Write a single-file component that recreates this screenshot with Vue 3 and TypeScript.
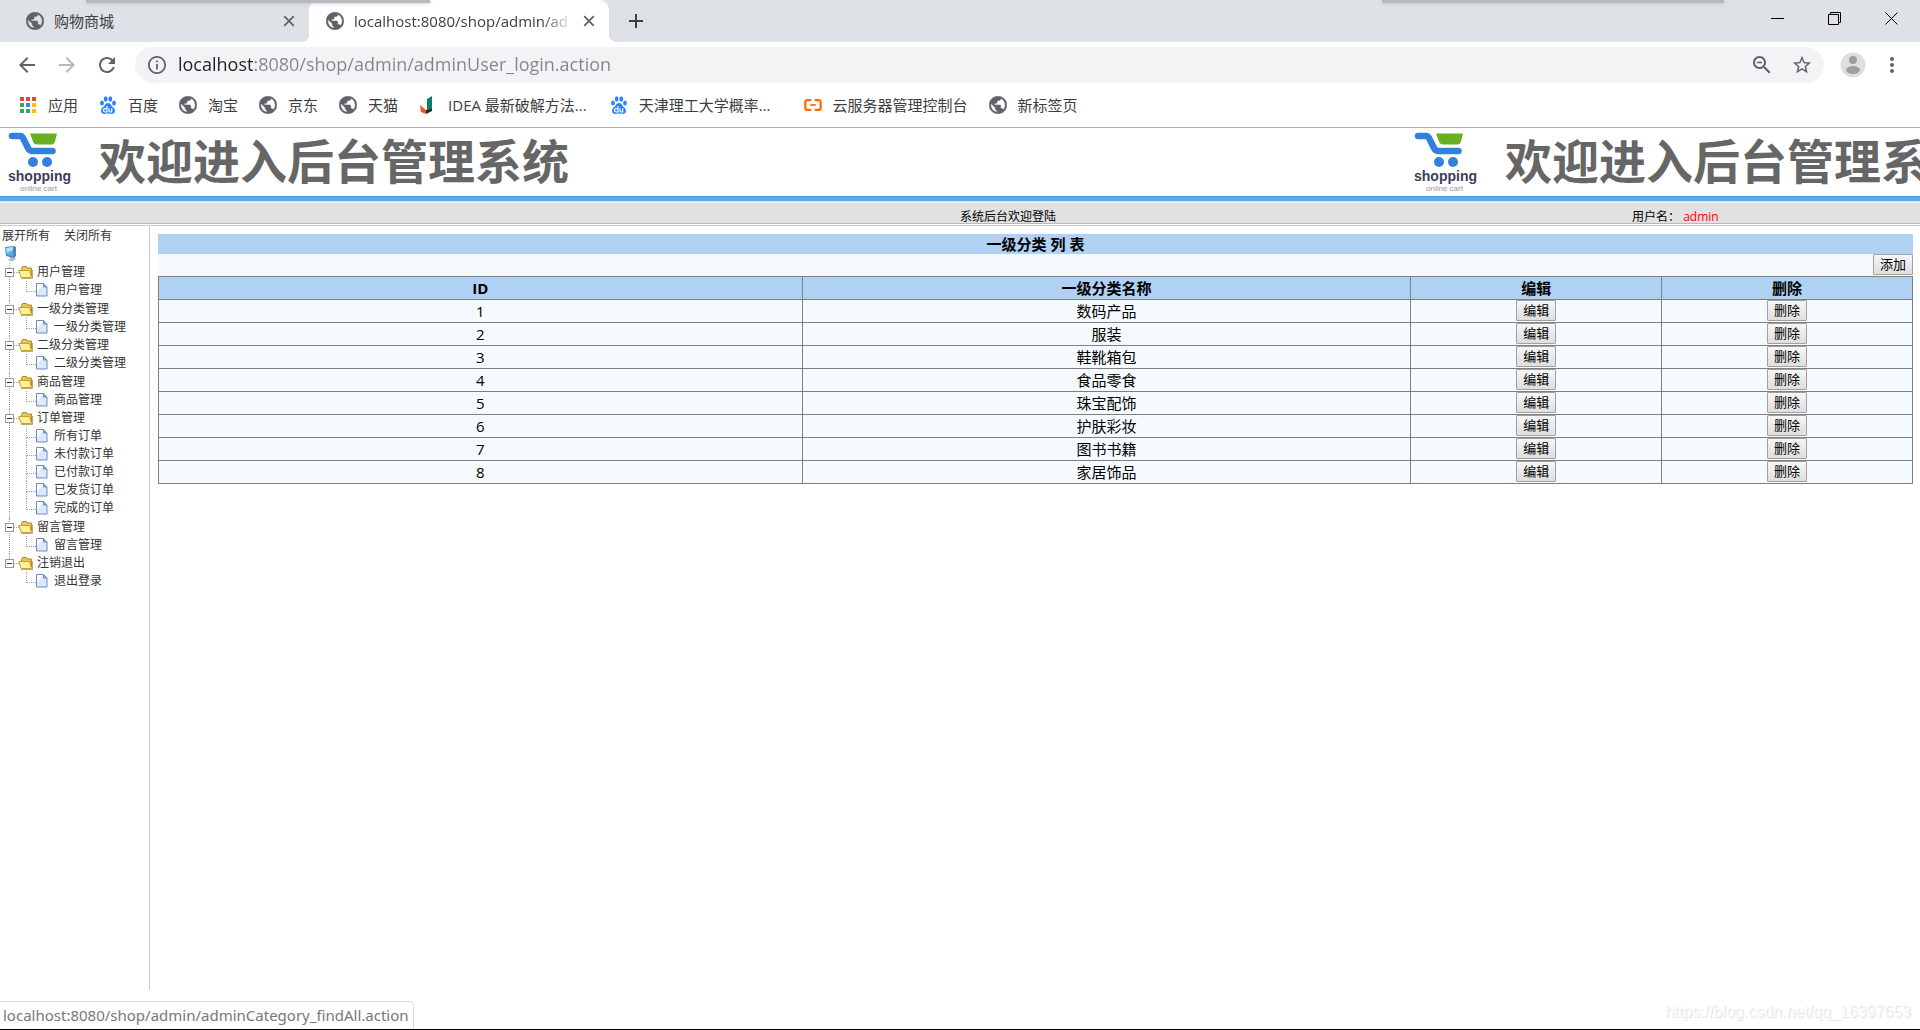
<script setup lang="ts">
import { ref } from 'vue'

interface Bookmark {
  icon: string
  label: string
  cls?: string
}
interface TreeGroup {
  name: string
  open: boolean
  items: string[]
}

const bookmarks: Bookmark[] = [
  { icon: 'apps', label: '应用' },
  { icon: 'paw', label: '百度' },
  { icon: 'globe', label: '淘宝' },
  { icon: 'globe', label: '京东' },
  { icon: 'globe', label: '天猫' },
  { icon: 'idea', label: 'IDEA 最新破解方法...', cls: 'long' },
  { icon: 'paw', label: '天津理工大学概率...', cls: 'wide' },
  { icon: 'cloud', label: '云服务器管理控制台' },
  { icon: 'globe', label: '新标签页' },
]

const groups = ref<TreeGroup[]>([
  { name: '用户管理', open: true, items: ['用户管理'] },
  { name: '一级分类管理', open: true, items: ['一级分类管理'] },
  { name: '二级分类管理', open: true, items: ['二级分类管理'] },
  { name: '商品管理', open: true, items: ['商品管理'] },
  { name: '订单管理', open: true, items: ['所有订单', '未付款订单', '已付款订单', '已发货订单', '完成的订单'] },
  { name: '留言管理', open: true, items: ['留言管理'] },
  { name: '注销退出', open: true, items: ['退出登录'] },
])

const categories = ['数码产品', '服装', '鞋靴箱包', '食品零食', '珠宝配饰', '护肤彩妆', '图书书籍', '家居饰品']

const address = ref('localhost:8080/shop/admin/adminUser_login.action')

function setAll(open: boolean) {
  groups.value.forEach((g) => (g.open = open))
}
</script>

<template>
  <div class="window">
    <svg class="defs" aria-hidden="true">
      <symbol id="globe" viewBox="2 2 20 20">
        <path fill="#5f6368" stroke="#5f6368" stroke-width=".6" d="M12 2.300C6.480 2.300 2.300 6.480 2.300 12s4.180 9.700 9.700 9.700 9.700-4.180 9.700-9.700S17.520 2.300 12 2.300zm-1 17.630c-3.950-.490-7-3.850-7-7.930 0-.620.080-1.210.210-1.790L9 15v1c0 1.100.900 2 2 2v1.930zm6.900-2.540c-.260-.810-1-1.390-1.900-1.390h-1v-3c0-.550-.450-1-1-1H8v-2h2c.550 0 1-.450 1-1V7h2c1.100 0 2-.900 2-2v-.410c2.930 1.190 5 4.060 5 7.410 0 2.080-.800 3.970-2.100 5.390z" />
      </symbol>
      <symbol id="apps" viewBox="0 0 18 18">
        <path fill="#ea4335" d="M1 1h4v4H1zM7 1h4v4H7zM13 1h4v4h-4z" />
        <path fill="#34a853" d="M1 7h4v4H1zM1 13h4v4H1z" />
        <path fill="#4285f4" d="M7 7h4v4H7z" />
        <path fill="#34a853" d="M7 13h4v4H7z" />
        <path fill="#fbbc05" d="M13 7h4v4h-4zM13 13h4v4h-4z" />
      </symbol>
      <symbol id="paw" viewBox="0 0 18 18">
        <g fill="#2a83fb">
          <ellipse cx="3" cy="7" rx="1.900" ry="2.500" />
          <ellipse cx="6.700" cy="3" rx="1.900" ry="2.700" />
          <ellipse cx="11.300" cy="3" rx="1.900" ry="2.700" />
          <ellipse cx="15" cy="7" rx="1.900" ry="2.500" />
          <path d="M9 7c2.200 0 2.800 1.900 4 3.200 1.400 1.400 3.200 2.500 3 5-.200 1.900-1.500 2.700-3.200 2.700-1.400 0-2.300-.300-3.800-.300s-2.400.300-3.800.300C3.500 17.900 2.200 17.100 2 15.200c-.200-2.500 1.600-3.600 3-5C6.200 8.900 6.800 7 9 7z" />
        </g>
        <path fill="none" stroke="#fff" stroke-width="1.200" d="M8 10v6H6.200a1.600 1.600 0 0 1 0-3.400H8M10 12.200v2.600q0 1.200 1.200 1.200h1.500v-3.800" />
      </symbol>
      <symbol id="idea" viewBox="0 0 18 18">
        <path fill="#087e6e" d="M8 3l5-3v14l-5 2z" />
        <path fill="#f05423" d="M1 9l6 5v4l-5-2z" />
        <path fill="#282828" d="M7 14l6-1v2l-6 3z" />
      </symbol>
      <symbol id="cloud" viewBox="0 0 20 14">
        <path fill="none" stroke="#ff6a00" stroke-width="2.500" d="M8 1.500H4q-2.500 0-2.500 2.500v6q0 2.500 2.500 2.500h4M12 1.500h4q2.500 0 2.500 2.500v6q0 2.500-2.500 2.500h-4" />
        <path fill="#ff6a00" d="M7 6h6v2H7z" />
      </symbol>
      <symbol id="cart" viewBox="0 0 50 37">
        <path fill="#68b022" d="M22 2.500h27l-2 8q-1 3-3 3H29q-3 0-4-3z" />
        <path fill="none" stroke="#3280dc" stroke-width="6.500" stroke-linecap="round" stroke-linejoin="round" d="M4 5h8q2 0 3 2l5 10q1.500 3 4.500 3h20" />
        <circle cx="25" cy="31" r="5" fill="#3280dc" />
        <circle cx="39" cy="31" r="5" fill="#3280dc" />
      </symbol>
      <symbol id="computer" viewBox="0 0 12 16">
        <path fill="#aebfd0" d="M4 9l5-1v3l2 2-4 2.500-4-1.500 2-2z" />
        <path fill="#5a82b8" d="M0 1l9-1 2 1v9l-2 2-8-2z" />
        <path fill="#4fb5f2" d="M1 2l7-1v9l-6-1z" />
        <path fill="#a9e3fb" d="M1 2l7-1v3L2 7z" />
      </symbol>
      <symbol id="folder" viewBox="0 0 16 14">
        <path fill="#e9c65a" stroke="#b28a22" d="M3.500 11V3.500l1-2h4l1 1.500h4v8z" />
        <path fill="#fdf09a" stroke="#c9a02c" d="M.800 5.500h10.700l2 7H3.200z" />
        <path fill="none" stroke="#8d7025" d="M3 13.500h11.500V5" opacity=".6" />
      </symbol>
      <symbol id="page" viewBox="0 0 12 14">
        <path fill="#dbe9fc" stroke="#7189bd" d="M.500.500h7l3.500 3.500v9H.500z" />
        <path fill="#fff" d="M1 1h6L1 9z" />
        <path fill="#a5bfe9" stroke="#7189bd" d="M7.500.500v3.500H11z" />
      </symbol>
    </svg>

    <header class="tabs">
      <div class="tab">
        <svg class="i18"><use href="#globe" /></svg>
        <span class="tab-title">购物商城</span>
        <button class="plain" aria-label="关闭标签页">
          <svg class="i12" viewBox="0 0 10 10"><path d="M1 1l8 8M9 1L1 9" /></svg>
        </button>
      </div>
      <div class="tab active">
        <svg class="i18"><use href="#globe" /></svg>
        <span class="tab-title">localhost:8080/shop/admin/ad</span>
        <button class="plain" aria-label="关闭标签页">
          <svg class="i12" viewBox="0 0 10 10"><path d="M1 1l8 8M9 1L1 9" /></svg>
        </button>
      </div>
      <button class="plain new-tab" aria-label="打开新的标签页">
        <svg width="16" height="16" viewBox="0 0 16 16"><path d="M8 1v14M1 8h14" /></svg>
      </button>
      <div class="controls">
        <button class="plain" aria-label="最小化">
          <svg width="13" height="13" viewBox="0 0 13 13"><path d="M0 6.500h13" /></svg>
        </button>
        <button class="plain" aria-label="还原">
          <svg width="13" height="13" viewBox="0 0 13 13"><path d="M.500 2.500h10v10H.500zM2.500 2.500v-2h10v10h-2" /></svg>
        </button>
        <button class="plain" aria-label="关闭">
          <svg width="13" height="13" viewBox="0 0 13 13"><path d="M.500.500l12 12M12.500.500l-12 12" /></svg>
        </button>
      </div>
      <i class="edge left"></i>
      <i class="edge right"></i>
    </header>

    <nav class="toolbar" aria-label="浏览器工具栏">
      <button class="plain" aria-label="后退">
        <svg class="i24" viewBox="0 0 24 24"><path d="M20 11H7.830l5.590-5.590L12 4l-8 8 8 8 1.410-1.410L7.830 13H20v-2z" /></svg>
      </button>
      <button class="plain dim" aria-label="前进">
        <svg class="i24" viewBox="0 0 24 24"><path d="M4 11h12.170l-5.590-5.590L12 4l8 8-8 8-1.410-1.410L16.170 13H4v-2z" /></svg>
      </button>
      <button class="plain" aria-label="重新加载">
        <svg class="i24" viewBox="0 0 24 24"><path d="M17.650 6.350C16.200 4.900 14.210 4 12 4c-4.420 0-7.990 3.580-7.990 8s3.570 8 7.990 8c3.730 0 6.840-2.550 7.730-6h-2.080c-.820 2.330-3.040 4-5.650 4-3.310 0-6-2.690-6-6s2.690-6 6-6c1.660 0 3.140.690 4.220 1.780L13 11h7V4l-2.350 2.350z" /></svg>
      </button>
      <div class="omnibox">
        <svg class="i18" viewBox="2 2 20 20"><path d="M11 17h2v-6h-2v6zm1-15C6.480 2 2 6.480 2 12s4.480 10 10 10 10-4.480 10-10S17.520 2 12 2zm0 18c-4.410 0-8-3.590-8-8s3.590-8 8-8 8 3.590 8 8-3.590 8-8 8zM11 9h2V7h-2v2z" /></svg>
        <input v-model="address" class="url" type="text" aria-label="地址栏" />
        <button class="plain" aria-label="缩放">
          <svg class="i24" viewBox="0 0 24 24"><path d="M15.500 14h-.790l-.280-.270C15.410 12.590 16 11.110 16 9.500 16 5.910 13.090 3 9.500 3S3 5.910 3 9.500 5.910 16 9.500 16c1.610 0 3.090-.590 4.230-1.570l.270.280v.790l5 4.990L20.490 19l-4.990-5zm-6 0C7.010 14 5 11.990 5 9.500S7.010 5 9.500 5 14 7.010 14 9.500 11.990 14 9.500 14zM7 8.800h5v1.400H7z" /></svg>
        </button>
        <button class="plain" aria-label="收藏">
          <svg class="i22" viewBox="0 0 24 24"><path d="M22 9.240l-7.190-.620L12 2 9.190 8.630 2 9.240l5.460 4.730L5.820 21 12 17.270 18.180 21l-1.630-7.030L22 9.240zM12 15.400l-3.760 2.270 1-4.280-3.320-2.880 4.380-.380L12 6.100l1.710 4.040 4.380.380-3.320 2.880 1 4.280L12 15.400z" /></svg>
        </button>
      </div>
      <button class="plain" aria-label="用户">
        <svg class="i26" viewBox="0 0 26 26">
          <circle cx="13" cy="13" r="12.500" fill="#dedede" />
          <circle cx="13" cy="8" r="4" fill="#9e9e9e" />
          <ellipse cx="13" cy="18" rx="7" ry="4" fill="#9e9e9e" />
        </svg>
      </button>
      <button class="plain menu" aria-label="菜单">
        <svg width="6" height="18" viewBox="0 0 6 18"><circle cx="3" cy="3" r="2" /><circle cx="3" cy="9" r="2" /><circle cx="3" cy="15" r="2" /></svg>
      </button>
    </nav>

    <nav class="bookmarks" aria-label="书签栏">
      <a v-for="b in bookmarks" :key="b.label" href="#" :class="b.cls">
        <svg class="i18"><use :href="'#' + b.icon" /></svg>
        <span>{{ b.label }}</span>
      </a>
    </nav>

    <div class="banner">
      <div v-for="n in 2" :key="n" class="banner-tile" :aria-hidden="n > 1">
        <div class="logo">
          <svg class="cart"><use href="#cart" /></svg>
          <b>shopping</b>
          <small>online cart</small>
        </div>
        <span class="welcome">欢迎进入后台管理系统</span>
      </div>
    </div>
    <div class="infobar">
      <span class="hello">系统后台欢迎登陆</span>
      <span>用户名： <em>admin</em></span>
    </div>

    <div class="body">
      <aside class="side">
        <div class="side-actions">
          <a href="#" @click.prevent="setAll(true)">展开所有</a>
          <a href="#" @click.prevent="setAll(false)">关闭所有</a>
        </div>
        <div class="root"><svg class="computer"><use href="#computer" /></svg></div>
        <ul class="tree">
          <li v-for="g in groups" :key="g.name" class="group">
            <div class="node">
              <button class="toggle" :aria-expanded="g.open" :aria-label="g.name" @click="g.open = !g.open"></button>
              <svg class="folder"><use href="#folder" /></svg>
              <a href="#">{{ g.name }}</a>
            </div>
            <ul v-if="g.open" class="leaves">
              <li v-for="item in g.items" :key="item" class="leaf">
                <svg class="page"><use href="#page" /></svg>
                <a href="#">{{ item }}</a>
              </li>
            </ul>
          </li>
        </ul>
      </aside>

      <main class="main">
        <h1>一级分类 列 表</h1>
        <div class="add-row"><button class="btn">添加</button></div>
        <table>
          <colgroup>
            <col class="c-id" />
            <col class="c-name" />
            <col class="c-act" />
            <col class="c-act" />
          </colgroup>
          <thead>
            <tr>
              <th>ID</th>
              <th>一级分类名称</th>
              <th>编辑</th>
              <th>删除</th>
            </tr>
          </thead>
          <tbody>
            <tr v-for="(c, i) in categories" :key="c">
              <td>{{ i + 1 }}</td>
              <td>{{ c }}</td>
              <td class="act"><button class="btn">编辑</button></td>
              <td class="act"><button class="btn">删除</button></td>
            </tr>
          </tbody>
        </table>
      </main>
    </div>

    <div class="status">localhost:8080/shop/admin/adminCategory_findAll.action</div>
    <div class="watermark">https://blog.csdn.net/qq_16397653</div>
  </div>
</template>

<style>
body {
  background: #fff;
}
</style>

<style scoped>
* {
  box-sizing: border-box;
}
.window {
  position: relative;
  display: flex;
  flex-direction: column;
  min-height: 100vh;
  overflow: hidden;
  border-bottom: 1px solid #000;
  background: #fff;
  color: #000;
  font-family: "Open Sans", "Noto Sans CJK SC", sans-serif;
  font-size: 15px;
}
.defs {
  position: absolute;
  width: 0;
  height: 0;
}
svg {
  display: block;
  flex: none;
}
a {
  color: inherit;
  text-decoration: none;
}
ul {
  margin: 0;
  padding: 0;
  list-style: none;
}
.plain {
  display: flex;
  align-items: center;
  justify-content: center;
  flex: none;
  padding: 0;
  border: 0;
  background: none;
}
.i12 {
  width: 12px;
  height: 12px;
}
.i18 {
  width: 18px;
  height: 18px;
}
.i22 {
  width: 22px;
  height: 22px;
}
.i24 {
  width: 24px;
  height: 24px;
}
.i26 {
  width: 26px;
  height: 26px;
}

/* tab strip */
.tabs {
  position: relative;
  display: flex;
  height: 42px;
  padding-left: 9px;
  background: #dee1e6;
}
.tab {
  position: relative;
  display: flex;
  align-items: center;
  width: 300px;
  padding: 0 14px 0 17px;
  color: #3c4043;
}
.tab.active {
  border-radius: 10px 10px 0 0;
  background: #fff;
}
.tab.active::before,
.tab.active::after {
  content: "";
  position: absolute;
  bottom: 0;
  width: 8px;
  height: 8px;
}
.tab.active::before {
  right: 100%;
  background: radial-gradient(circle at 0 0, transparent 8px, #fff 8px);
}
.tab.active::after {
  left: 100%;
  background: radial-gradient(circle at 100% 0, transparent 8px, #fff 8px);
}
.tab-title {
  flex: 1;
  min-width: 0;
  margin: 0 9px 0 10px;
  white-space: nowrap;
  line-height: 20px;
}
.active .tab-title {
  mask-image: linear-gradient(to left, transparent, #000 32px);
}
.tab path {
  fill: none;
  stroke: #5f6368;
  stroke-width: 1.5;
}
.new-tab {
  width: 40px;
  margin-left: 7px;
}
.new-tab path {
  stroke: #3c4043;
  stroke-width: 2;
}
.controls {
  display: flex;
  margin-left: auto;
}
.controls button {
  width: 57px;
  height: 36px;
}
.controls path {
  fill: none;
  stroke: #000;
}
.edge {
  position: absolute;
  top: 0;
  height: 3px;
  background: #b6b9bd;
  box-shadow: 0 0 4px #b6b9bd;
}
.edge.left {
  left: 86px;
  width: 344px;
}
.edge.right {
  right: 196px;
  width: 342px;
}

/* toolbar */
.toolbar {
  display: flex;
  align-items: center;
  gap: 16px;
  height: 46px;
  padding: 0 18px 0 15px;
  fill: #5f6368;
}
.dim {
  opacity: 0.45;
}
.menu {
  width: 20px;
}
.omnibox {
  display: flex;
  align-items: center;
  flex: 1;
  gap: 17px;
  height: 36px;
  padding: 0 11px 0 13px;
  border-radius: 18px;
  background: #f1f3f4;
}
.url {
  flex: 1;
  min-width: 0;
  margin-left: -5px;
  padding: 0 0 2px;
  border: 0;
  outline: 0;
  background: linear-gradient(to right, #202124 77px, #80868b 77px);
  background-clip: text;
  color: transparent;
  font: 18px/26px "Open Sans", sans-serif;
}

/* bookmarks */
.bookmarks {
  display: flex;
  align-items: center;
  gap: 21px;
  height: 40px;
  padding: 0 0 6px 19px;
  border-bottom: 1px solid #b0b0b0;
  color: #3c4043;
  line-height: 20px;
  white-space: nowrap;
}
.bookmarks a {
  display: flex;
  align-items: center;
  gap: 11px;
}
.bookmarks .long {
  margin-right: 2px;
}
.bookmarks .wide {
  margin-right: 12px;
}

/* banner */
.banner {
  display: flex;
  height: 68px;
  overflow: hidden;
}
.banner-tile {
  display: flex;
  flex: 0 0 1406px;
  padding-left: 8px;
}
.logo {
  display: flex;
  flex-direction: column;
  width: 91px;
  padding-top: 3px;
}
.cart {
  width: 50px;
  height: 37px;
}
.logo b {
  color: #3d3d5c;
  font: 700 14px/16px "Liberation Sans", sans-serif;
}
.logo small {
  padding-left: 12px;
  color: #999;
  font: 8px/10px "Liberation Sans", sans-serif;
}
.welcome {
  color: #666;
  font-weight: 700;
  font-size: 47px;
  line-height: 66px;
  white-space: nowrap;
}
.infobar {
  display: grid;
  grid-template-columns: 50% 35% 15%;
  align-items: end;
  height: 30px;
  padding-bottom: 1px;
  border-bottom: 1px solid #ccc;
  background: linear-gradient(#4b9be0 0 1px, #5eabea 1px 5px, #d4e6f6 5px 6px, #f0f0f0 6px 7px, #e1e1e1 7px 27px, #b9b9b9 27px 28px, #fff 28px);
  font-size: 12px;
  line-height: 14px;
}
.hello {
  grid-column: 2;
}
.infobar em {
  color: #f00;
  font-style: normal;
}

/* side tree */
.body {
  display: flex;
  flex: 1;
  padding-bottom: 39px;
}
.side {
  flex: 0 0 150px;
  border-right: 1px solid #ccc;
  color: #333;
  font-size: 12px;
  line-height: 18px;
}
.side-actions {
  display: flex;
  gap: 14px;
  padding: 1px 0 0 2px;
}
.root {
  height: 18px;
  padding: 1px 0 0 5px;
}
.computer {
  width: 12px;
  height: 16px;
}
.group {
  position: relative;
}
.group:nth-child(odd) {
  padding-bottom: 1px;
}
.group::before {
  content: "";
  position: absolute;
  top: 0;
  bottom: 0;
  left: 9px;
  border-left: 1px dotted #a0a0a0;
}
.group:last-child::before {
  bottom: auto;
  height: 9px;
}
.node {
  position: relative;
  display: flex;
  align-items: center;
  height: 18px;
  padding-left: 5px;
}
.toggle {
  width: 9px;
  height: 9px;
  padding: 0;
  border: 1px solid #999;
  background: linear-gradient(#333, #333) center / 5px 1px no-repeat #fff;
}
.node::before {
  content: "";
  position: absolute;
  top: 9px;
  left: 14px;
  width: 5px;
  border-top: 1px dotted #a0a0a0;
}
.folder {
  width: 16px;
  height: 14px;
  margin: 0 3px 0 4px;
}
.leaf {
  position: relative;
  display: flex;
  align-items: center;
  gap: 6px;
  height: 18px;
  padding-left: 36px;
}
.leaf::before {
  content: "";
  position: absolute;
  top: 0;
  left: 26px;
  width: 9px;
  height: 10px;
  border-bottom: 1px dotted #a0a0a0;
  border-left: 1px dotted #a0a0a0;
}
.leaf:not(:last-child)::after {
  content: "";
  position: absolute;
  top: 10px;
  bottom: 0;
  left: 26px;
  border-left: 1px dotted #a0a0a0;
}
.page {
  width: 12px;
  height: 14px;
}

/* category list */
.main {
  flex: 1;
  min-width: 0;
  padding: 8px 7px 0 8px;
}
h1 {
  margin: 0;
  background: #afd1f3;
  font-size: 15px;
  line-height: 20px;
  text-align: center;
}
.add-row {
  display: flex;
  justify-content: flex-end;
  height: 22px;
  background: #f5fafe;
}
.btn {
  width: 40px;
  height: 21px;
  padding: 0 0 1px;
  border: 1px solid #a0a0a0;
  border-radius: 1px;
  background: linear-gradient(#f6f6f6, #dedede);
  color: #000;
  font-family: inherit;
  font-size: 13px;
  line-height: 18px;
}
table {
  width: 100%;
  border-collapse: collapse;
  table-layout: fixed;
  background: #f5fafe;
  text-align: center;
  line-height: 22px;
}
.c-id {
  width: 36.7%;
}
.c-name {
  width: 34.7%;
}
.c-act {
  width: 14.3%;
}
th,
td {
  height: 23px;
  padding: 0;
  border: 1px solid #808080;
}
th {
  background: #afd1f3;
}
.act {
  vertical-align: top;
}
.act .btn {
  display: block;
  margin: 0 auto;
}

/* overlays */
.status {
  position: absolute;
  bottom: 0;
  left: 0;
  height: 28px;
  padding: 0 4px 0 3px;
  border: 1px solid #dadce0;
  border-width: 1px 1px 0 0;
  border-top-right-radius: 5px;
  background: #fff;
  color: #75787b;
  font-family: "Noto Sans", sans-serif;
  line-height: 27px;
}
.watermark {
  position: absolute;
  right: 9px;
  bottom: 7px;
  color: #fafafa;
  font: 16px/20px "Liberation Sans", sans-serif;
  text-shadow: 1px 1px 1px #ddd;
}
</style>
